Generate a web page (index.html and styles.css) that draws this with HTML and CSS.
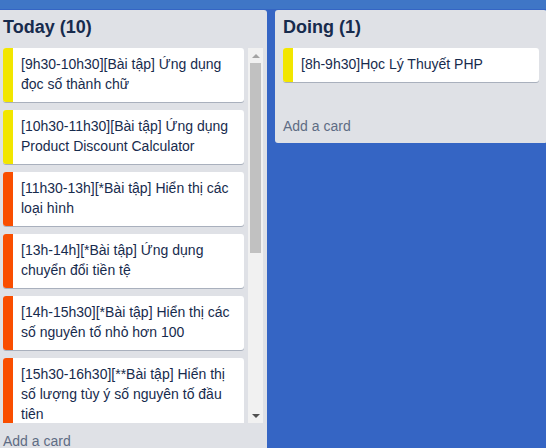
FILE: index.html
```html
<!DOCTYPE html>
<html lang="vi">
<head>
<meta charset="utf-8">
<title>Board</title>
<link rel="stylesheet" href="styles.css">
</head>
<body>
<div class="topbar"></div>
<div class="board">
  <section class="list list-tall">
    <h2 class="list-title">Today (10)</h2>
    <div class="cards-scroll">
      <div class="cards-inner">
        <div class="card"><span class="label yellow"></span><span class="card-text">[9h30-10h30][Bài tập] Ứng dụng đọc số thành chữ</span></div>
        <div class="card"><span class="label yellow"></span><span class="card-text">[10h30-11h30][Bài tập] Ứng dụng Product Discount Calculator</span></div>
        <div class="card"><span class="label orange"></span><span class="card-text">[11h30-13h][*Bài tập] Hiển thị các loại hình</span></div>
        <div class="card"><span class="label orange"></span><span class="card-text">[13h-14h][*Bài tập] Ứng dụng chuyển đổi tiền tệ</span></div>
        <div class="card"><span class="label orange"></span><span class="card-text">[14h-15h30][*Bài tập] Hiển thị các số nguyên tố nhỏ hơn 100</span></div>
        <div class="card"><span class="label orange"></span><span class="card-text">[15h30-16h30][**Bài tập] Hiển thị số lượng tùy ý số nguyên tố đầu tiên</span></div>
        <div class="card"><span class="label yellow"></span><span class="card-text">[16h30-17h30][Bài tập] Ứng dụng Simple Dictionary</span></div>
        <div class="card"><span class="label orange"></span><span class="card-text">[17h30-18h30][*Bài tập] Tính ngày tiếp theo</span></div>
      </div>
      <div class="scrollbar">
        <div class="sb-btn"><span class="arrow-up"></span></div>
        <div class="sb-track"><div class="sb-thumb"></div></div>
        <div class="sb-btn"><span class="arrow-down"></span></div>
      </div>
    </div>
    <div class="add-card">Add a card</div>
  </section>
  <section class="list">
    <h2 class="list-title">Doing (1)</h2>
    <div class="cards cards-min">
      <div class="card"><span class="label yellow"></span><span class="card-text">[8h-9h30]Học Lý Thuyết PHP</span></div>
    </div>
    <div class="add-card">Add a card</div>
  </section>
</div>
</body>
</html>
```

FILE: styles.css
```css
html, body {
  margin: 0;
  padding: 0;
}
body {
  background: #3565c4;
  font-family: "Liberation Sans", Arial, sans-serif;
  overflow: hidden;
  height: 448px;
}
.topbar {
  height: 9px;
  background: #3f76c6;
}
.board {
  display: flex;
  align-items: flex-start;
  gap: 8px;
  margin-top: 1px;
  margin-left: -5px;
}
.list {
  flex: 0 0 272px;
  box-sizing: border-box;
  width: 272px;
  padding: 0 4px;
  background: #dfe1e6;
  border-radius: 3px;
}
.list-tall {
  height: 460px;
}
.list-title {
  margin: 0;
  padding: 5px 4px 9px;
  font-size: 18px;
  line-height: 24px;
  font-weight: bold;
  color: #172b4d;
}
.cards {
  padding: 0 4px;
}
.cards-min {
  min-height: 60px;
}
.cards-scroll {
  display: flex;
  height: 375px;
  padding-left: 4px;
}
.cards-inner {
  flex: 1;
  min-width: 0;
  overflow: hidden;
  padding-right: 4px;
}
.scrollbar {
  flex: 0 0 15px;
  display: flex;
  flex-direction: column;
  background: #f1f1f1;
}
.sb-btn {
  flex: 0 0 15px;
  display: flex;
  align-items: center;
  justify-content: center;
}
.arrow-up {
  width: 0;
  height: 0;
  border-left: 4px solid transparent;
  border-right: 4px solid transparent;
  border-bottom: 4px solid #a3a3a3;
}
.arrow-down {
  width: 0;
  height: 0;
  border-left: 4px solid transparent;
  border-right: 4px solid transparent;
  border-top: 4px solid #505050;
}
.sb-track {
  flex: 1;
  padding: 0 2px;
}
.sb-thumb {
  height: 190px;
  background: #c1c1c1;
}
.card {
  display: flex;
  background: #fff;
  border-radius: 3px;
  box-shadow: 0 1px 0 rgba(9, 30, 66, 0.25);
  margin-bottom: 8px;
}
.label {
  flex: 0 0 10px;
  border-radius: 3px 0 0 3px;
}
.yellow { background: #f2e600; }
.orange { background: #f94e00; }
.card-text {
  flex: 1;
  padding: 6px 8px 8px;
  font-size: 14px;
  line-height: 20px;
  color: #172b4d;
}
.add-card {
  padding: 8px 4px 7px;
  font-size: 14px;
  line-height: 20px;
  color: #5e6c84;
}
```
